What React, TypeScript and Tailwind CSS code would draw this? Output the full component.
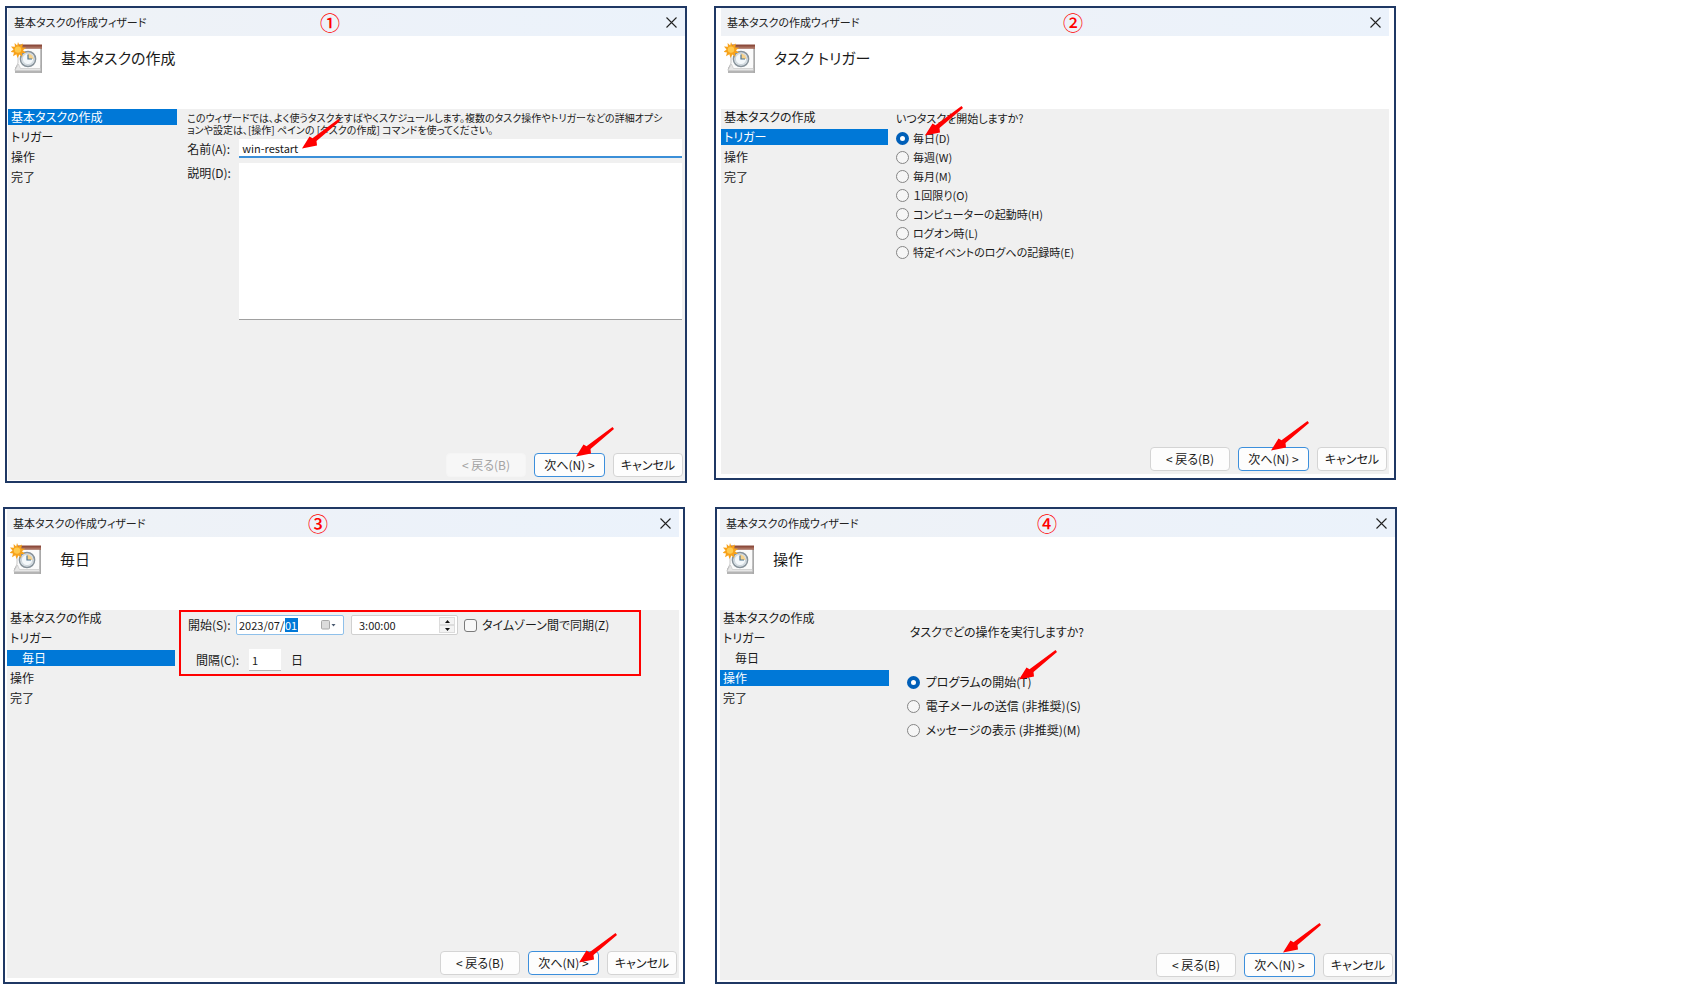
import type { ReactNode } from "react";

type StepItem = { label: string; nested?: boolean };

const firstSteps: StepItem[] = [
  { label: "基本タスクの作成" },
  { label: "トリガー" },
  { label: "操作" },
  { label: "完了" },
];

const dailySteps: StepItem[] = [
  { label: "基本タスクの作成" },
  { label: "トリガー" },
  { label: "毎日", nested: true },
  { label: "操作" },
  { label: "完了" },
];

function TaskIcon() {
  return (
    <svg className="h-8 w-8 shrink-0" viewBox="0 0 32 32" aria-hidden="true">
      <path d="M4 26l2-3h25v8H4z" fill="#b4b4b4" />
      <path d="M29.500 5H31v26h-1.500z" fill="#a9a9a9" />
      <path d="M7 5h22.500v23.500H10L4 28l3-7z" fill="#fbfbfb" stroke="#b0b0b0" strokeWidth=".7" />
      <path d="M4 28l3.500-6 2 4.500h20v2.200H4z" fill="#e6e6e6" stroke="#b9b9b9" strokeWidth=".5" />
      <path d="M8 2.500h23v4H8z" fill="#8c4b3c" />
      <path d="M8 4.500h23v2H8z" fill="#a9705f" />
      <circle cx="17" cy="17" r="7.600" fill="#dfe6eb" stroke="#87929a" strokeWidth="1.500" />
      <circle cx="17" cy="17" r="5.600" fill="#f4f8fb" stroke="#b9c3ca" strokeWidth=".6" />
      <path d="M17 17v-5.400a5.500 5.500 0 0 1 5.400 5.400z" fill="#f7d28c" />
      <path d="M17 12.400V17h4" fill="none" stroke="#4d7590" strokeWidth="1.200" />
      <path
        d="M7 0l1.500 3.600L12 1.600l-.8 3.800 4 .4-3.200 2.400 2.900 2.800-4-.1.7 3.900-3.200-2.300L6.500 16 5.400 12.300 2 14.200l1-3.800-3.500-.5 3-2.500L0 4.500l3.900.2L3.600.9l2.600 2.500z"
        fill="#f7a21b"
      />
      <circle cx="7" cy="7.600" r="3.200" fill="#ffc94d" />
    </svg>
  );
}

function Arrow({ className }: { className: string }) {
  return (
    <svg className={`pointer-events-none absolute h-[30px] w-[38px] ${className}`} viewBox="0 0 38 30" aria-hidden="true">
      <path d="M0 29.500L7.500 17.500L10.500 19.200L36.500 0L38 2L14.500 22L15 26.500Z" fill="#ff0000" />
    </svg>
  );
}

function WizardPanel({
  mark,
  markClass,
  heading,
  steps,
  active,
  className,
  backDisabled,
  nextArrow,
  children,
}: {
  mark: string;
  markClass: string;
  heading: string;
  steps: StepItem[];
  active: number;
  className: string;
  backDisabled?: boolean;
  nextArrow: string;
  children: ReactNode;
}) {
  const button = "h-6 rounded-[4px] border text-[12px] leading-[20px] whitespace-nowrap";
  return (
    <section className={`flex w-[40vw] shrink-0 flex-col border-2 border-[#1f3864] bg-white ${className}`}>
      <header className="relative flex h-7 shrink-0 items-center justify-between bg-linear-to-r from-[#eff2f6] to-[#ebf2fb] pr-2 pl-[6px]">
        <h1 className="text-[11px] leading-4 text-[#222]">基本タスクの作成ウィザード</h1>
        <span className={`absolute top-0 text-[20px] leading-[30px] font-medium text-[#ff0000] ${markClass}`}>{mark}</span>
        <button type="button" aria-label="閉じる" className="flex h-4 w-3 items-center justify-center">
          <svg className="h-[11px] w-[11px]" viewBox="0 0 11 11" aria-hidden="true">
            <path d="M.5.5l10 10M10.500.5l-10 10" stroke="#222" strokeWidth="1.100" />
          </svg>
        </button>
      </header>
      <div className="flex h-[73px] shrink-0 gap-[18px] pt-[6px] pl-[3px]">
        <TaskIcon />
        <h2 className="pt-1 text-[15px] leading-6 text-[#1a1a1a]">{heading}</h2>
      </div>
      <div className="flex grow bg-[#f0f0f0]">
        <ol className="flex w-1/4 shrink-0 flex-col gap-1 text-[12px] leading-4">
          {steps.map((step, i) => (
            <li
              key={step.label}
              className={`${step.nested ? "pl-[15px]" : "pl-[3px]"} ${i === active ? "bg-[#0078d7] text-white" : "text-[#1a1a1a]"}`}
            >
              {step.label}
            </li>
          ))}
        </ol>
        <form className="flex min-w-0 grow flex-col" onSubmit={(e) => e.preventDefault()}>
          {children}
          <div className="mt-auto flex justify-end gap-2 pr-[2px] pb-[3px]">
            <button
              type="button"
              disabled={backDisabled}
              className={`${button} w-20 ${backDisabled ? "border-[#f5f5f5] bg-[#f7f7f7] text-[#a3a3a3]" : "border-[#d4d4d4] bg-[#fdfdfd]"}`}
            >
              &lt; 戻る(B)
            </button>
            <div className="relative flex">
              <button type="submit" className={`${button} w-[71px] border-[#3c8fdc] bg-[#fdfdfd]`}>
                次へ(N) &gt;
              </button>
              <Arrow className={nextArrow} />
            </div>
            <button type="button" className={`${button} w-[70px] border-[#d4d4d4] bg-[#fdfdfd]`}>
              キャンセル
            </button>
          </div>
        </form>
      </div>
    </section>
  );
}

function RadioList({ name, options, rowClass }: { name: string; options: string[]; rowClass: string }) {
  return (
    <div className="flex flex-col">
      {options.map((option, i) => (
        <label key={option} className={`flex items-center whitespace-nowrap ${rowClass}`}>
          <input
            type="radio"
            name={name}
            defaultChecked={i === 0}
            className="h-[13px] w-[13px] shrink-0 appearance-none rounded-full border border-[#858585] bg-[#f6f6f6] checked:border-4 checked:border-[#005fb8] checked:bg-white"
          />
          {option}
        </label>
      ))}
    </div>
  );
}

function BasicTaskForm() {
  return (
    <div className="flex flex-col pt-[3px] pl-[10px] text-[12px]">
      <div className="relative">
        <p className="text-[10px] leading-3">
          このウィザードでは、よく使うタスクをすばやくスケジュールします。複数のタスク操作やトリガーなどの詳細オプシ
          <br />
          ョンや設定は、[操作] ペインの [タスクの作成] コマンドを使ってください。
        </p>
        <Arrow className="top-[7px] left-[115px]" />
      </div>
      <div className="flex pt-[3px] pr-[3px]">
        <label htmlFor="task-name" className="w-[52px] shrink-0 leading-[19px]">
          名前(A):
        </label>
        <input
          id="task-name"
          type="text"
          defaultValue="win-restart"
          className="h-[19px] min-w-0 grow border-b-2 border-[#3b8fd8] bg-white px-[3px] text-[11px] leading-4 outline-none"
        />
      </div>
      <div className="flex pt-[5px] pr-[3px]">
        <label htmlFor="task-note" className="w-[52px] shrink-0 pt-[2px] leading-4">
          説明(D):
        </label>
        <textarea id="task-note" className="h-[157px] min-w-0 grow resize-none border-b border-[#a0a0a0] bg-white outline-none" />
      </div>
    </div>
  );
}

function DailyForm() {
  return (
    <div className="mr-[38px] ml-1 flex h-[66px] flex-col border-2 border-[#ff0000] pt-[3px] pl-[7px] text-[12px]">
      <div className="flex h-5 items-center">
        <label htmlFor="start-date" className="w-[48px] shrink-0">
          開始(S):
        </label>
        <div className="flex h-5 w-[108px] shrink-0 items-center rounded-[2px] border border-[#8fc0ea] bg-white px-[2px] text-[11px]">
          <input id="start-date" type="text" defaultValue="2023/07/" className="w-[46px] shrink-0 bg-transparent leading-4 outline-none" />
          <input aria-label="開始日" type="text" defaultValue="01" className="h-[14px] w-[13px] shrink-0 bg-[#0078d7] leading-[14px] text-white outline-none" />
          <button type="button" aria-label="カレンダー" className="ml-auto flex w-5 items-center">
            <svg className="h-[10px] w-4" viewBox="0 0 16 10" aria-hidden="true">
              <rect x=".5" y=".5" width="8" height="8.500" rx="1" fill="#dcdcdc" stroke="#a8a8a8" />
              <path d="M10.500 4h4l-2 2.500z" fill="#4a5a70" />
            </svg>
          </button>
        </div>
        <div className="ml-[7px] flex h-5 w-[107px] shrink-0 items-center justify-between rounded-[2px] border border-[#d0d0d0] bg-white pr-[2px] pl-[7px]">
          <input aria-label="開始時刻" type="text" defaultValue="3:00:00" className="w-[60px] bg-transparent text-[11px] leading-4 outline-none" />
          <div className="flex w-4 flex-col">
            <button type="button" aria-label="増やす" className="flex h-2 items-center justify-center border border-[#dcdcdc] bg-[#f3f3f3]">
              <svg className="h-[3px] w-[5px]" viewBox="0 0 5 3" aria-hidden="true">
                <path d="M0 3h5L2.500 0z" fill="#111" />
              </svg>
            </button>
            <button type="button" aria-label="減らす" className="flex h-2 items-center justify-center border border-[#dcdcdc] bg-[#f3f3f3]">
              <svg className="h-[3px] w-[5px]" viewBox="0 0 5 3" aria-hidden="true">
                <path d="M0 0h5L2.500 3z" fill="#111" />
              </svg>
            </button>
          </div>
        </div>
        <label className="flex items-center gap-[5px] pl-[6px] whitespace-nowrap">
          <input type="checkbox" className="h-[13px] w-[13px] shrink-0 appearance-none rounded-[3px] border border-[#7a7a7a] bg-[#f8f8f8] checked:bg-[#005fb8]" />
          タイムゾーン間で同期(Z)
        </label>
      </div>
      <div className="flex items-center pt-[14px] pl-2">
        <label htmlFor="interval" className="w-[53px] shrink-0">
          間隔(C):
        </label>
        <input id="interval" type="text" defaultValue="1" className="h-[22px] w-8 border-b border-[#b5b5b5] bg-white px-[3px] text-[11px] outline-none" />
        <span className="pl-[10px]">日</span>
      </div>
    </div>
  );
}

export default function App() {
  return (
    <main
      className="flex min-h-screen flex-col gap-6 bg-white pt-[6px] text-[#1a1a1a]"
      style={{ fontFamily: '"Noto Sans CJK JP", sans-serif', fontFeatureSettings: '"palt"' }}
    >
      <div className="flex items-start gap-[27px] pl-[5px]">
        <WizardPanel
          mark="①"
          markClass="left-[312px]"
          heading="基本タスクの作成"
          steps={firstSteps}
          active={0}
          className="min-h-[477px] pb-px pl-px"
          nextArrow="-top-[26px] right-[-9px]"
          backDisabled
        >
          <BasicTaskForm />
        </WizardPanel>
        <WizardPanel
          mark="②"
          markClass="left-[342px]"
          heading="タスク トリガー"
          steps={firstSteps}
          active={1}
          className="min-h-[474px] pr-[5px] pb-1 pl-[5px]"
          nextArrow="-top-[26px] right-0"
        >
          <div className="flex flex-col pt-px pl-2 text-[11px]">
            <p className="leading-4">いつタスクを開始しますか?</p>
            <div className="relative pt-[3px]">
              <RadioList
                name="trigger"
                rowClass="h-[19px] gap-1"
                options={["毎日(D)", "毎週(W)", "毎月(M)", "１回限り(O)", "コンピューターの起動時(H)", "ログオン時(L)", "特定イベントのログへの記録時(E)"]}
              />
              <Arrow className="-top-5 left-[29px]" />
            </div>
          </div>
        </WizardPanel>
      </div>
      <div className="flex items-start gap-[30px] pl-[3px]">
        <WizardPanel
          mark="③"
          markClass="left-[301px]"
          heading="毎日"
          steps={dailySteps}
          active={2}
          className="min-h-[477px] pr-1 pb-1 pl-[2px]"
          nextArrow="-top-[18px] right-[-18px]"
        >
          <DailyForm />
        </WizardPanel>
        <WizardPanel
          mark="④"
          markClass="left-[317px]"
          heading="操作"
          steps={dailySteps}
          active={3}
          className="min-h-[477px] pb-[2px] pl-[3px]"
          nextArrow="-top-[30px] right-[-6px]"
        >
          <div className="flex flex-col pt-[14px] pl-[18px] text-[12px]">
            <p className="pl-[3px] leading-4">タスクでどの操作を実行しますか?</p>
            <div className="relative pt-[30px]">
              <RadioList
                name="action"
                rowClass="h-6 gap-[6px]"
                options={["プログラムの開始(T)", "電子メールの送信 (非推奨)(S)", "メッセージの表示 (非推奨)(M)"]}
              />
              <Arrow className="top-[10px] left-[112px]" />
            </div>
          </div>
        </WizardPanel>
      </div>
    </main>
  );
}
